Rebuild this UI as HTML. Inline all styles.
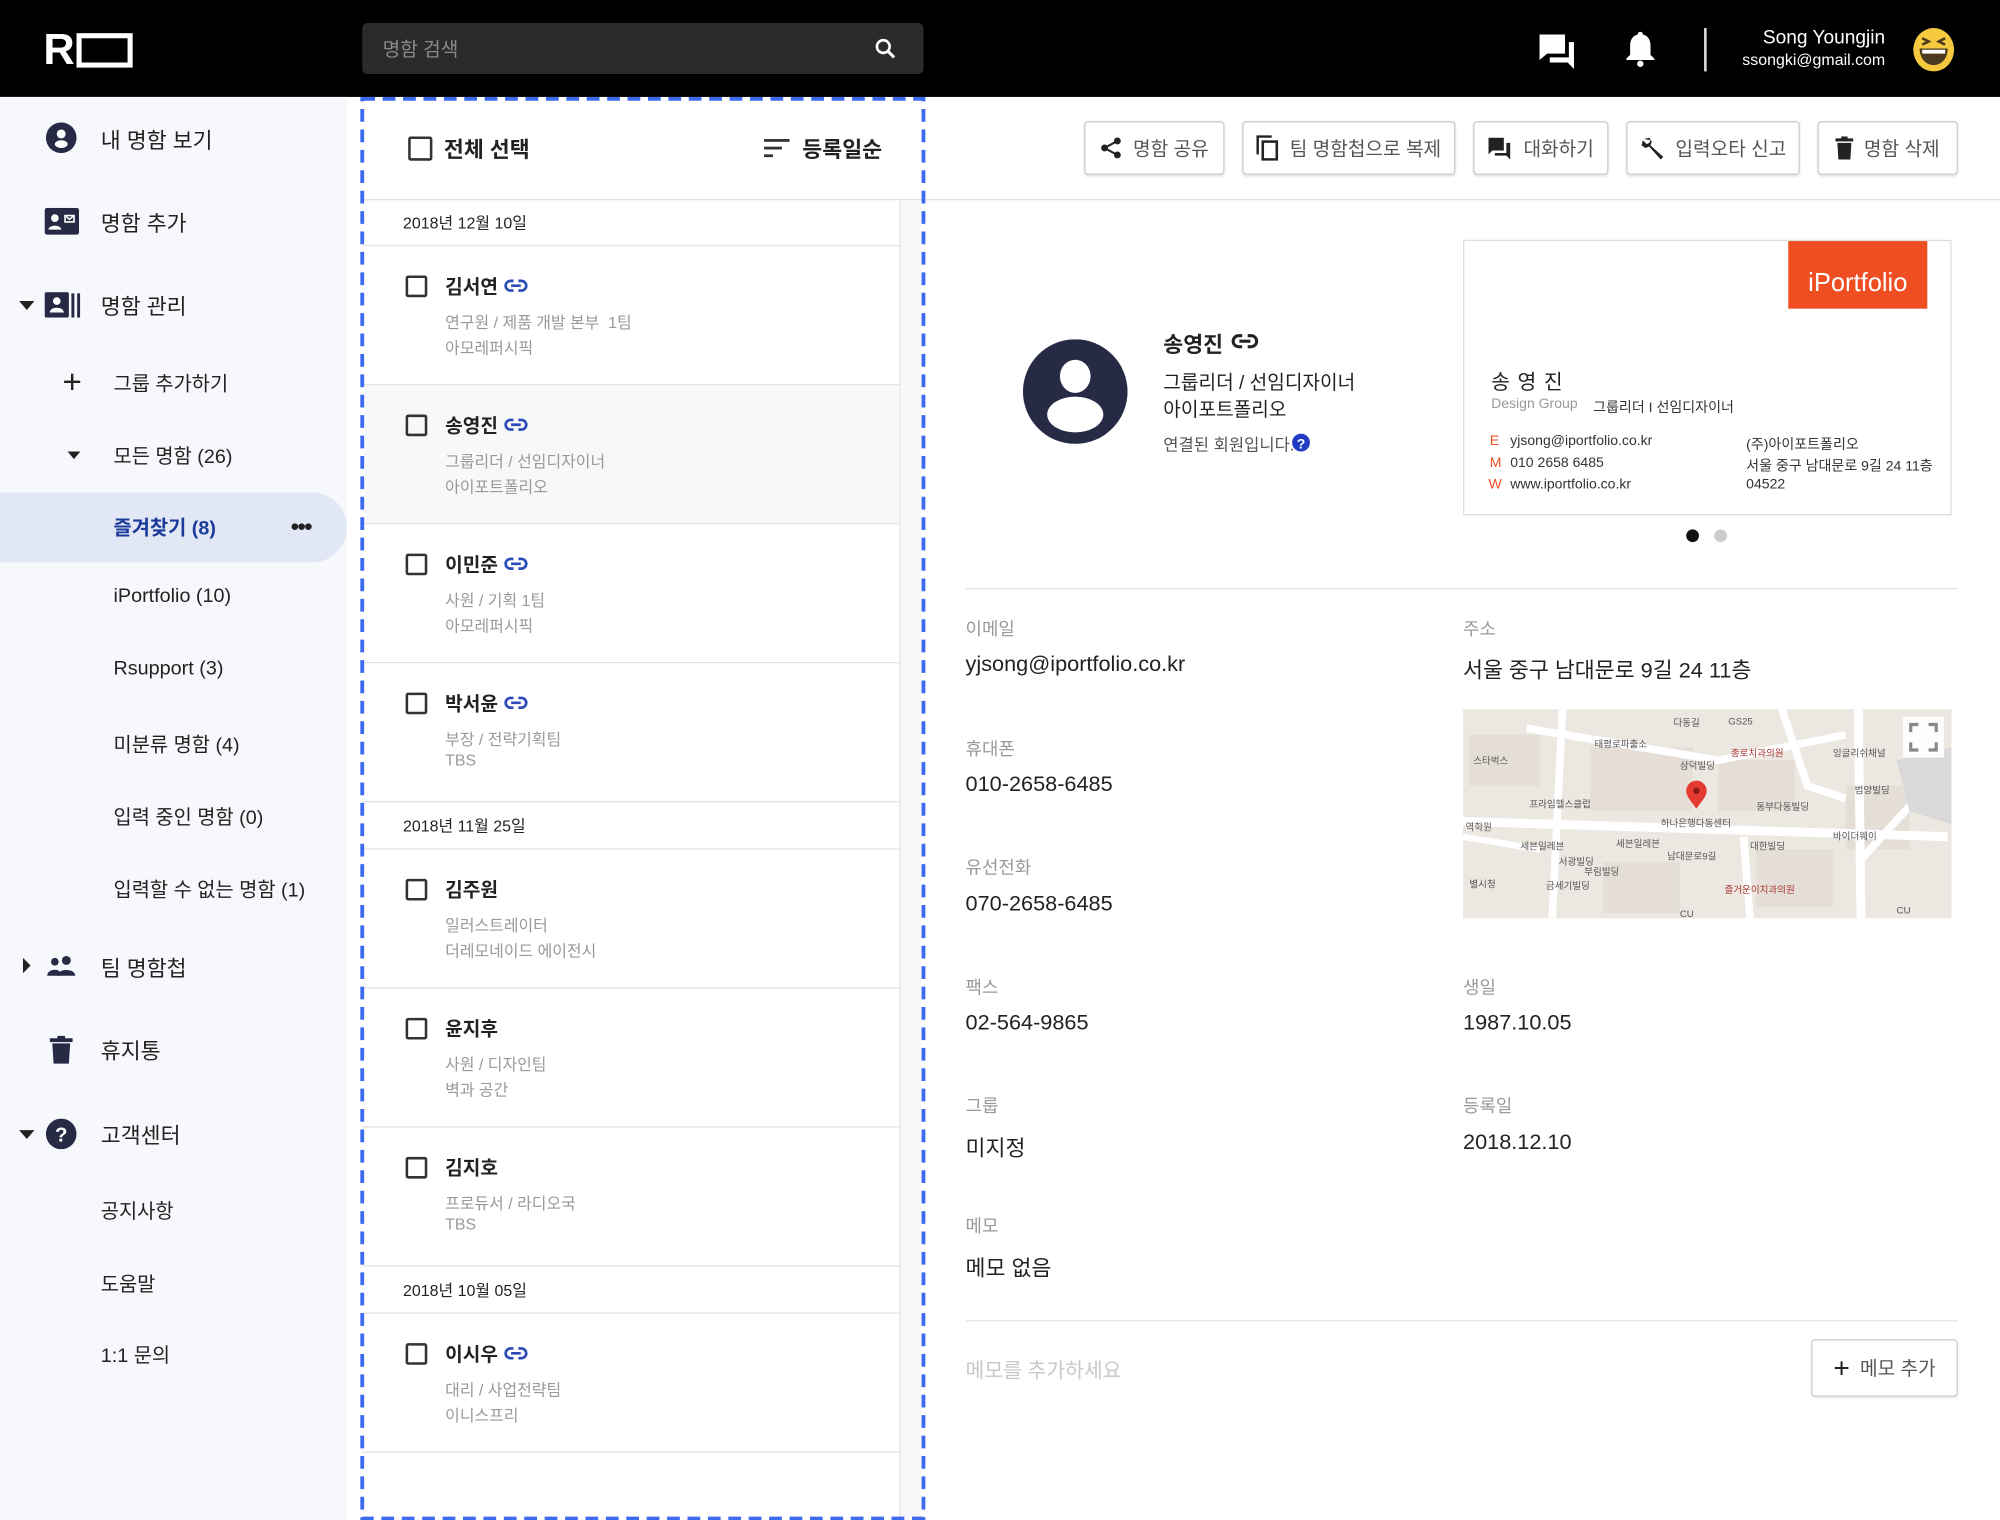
<!DOCTYPE html>
<html><head><meta charset="utf-8"><style>
*{margin:0;padding:0;box-sizing:border-box}
html,body{width:2000px;height:1520px;overflow:hidden;background:#fff}
#w{position:absolute;left:0;top:0;width:1568px;height:1192px;transform:scale(1.27551);transform-origin:0 0;font-family:"Liberation Sans","Noto Sans CJK KR",sans-serif;color:#222}
.a{position:absolute;white-space:nowrap}
.hd{left:0;top:0;width:1568px;height:76px;background:#000}
.sb{left:0;top:76px;width:272px;height:1116px;background:#f7f8fb}
.si{font-size:16px;color:#222}
.cb{position:absolute;width:17px;height:17px;border:2px solid #333;border-radius:2px}
.nm{font-size:15px;font-weight:bold;color:#222}
.sub{font-size:12.5px;color:#999}
.dt{font-size:12.5px;color:#222}
.ln{position:absolute;height:1px;background:#e3e3e3}
.btn{position:absolute;top:95px;height:42px;border:1px solid #ccc;border-radius:3px;background:#fff;box-shadow:0 1px 2px rgba(0,0,0,.12);font-size:15px;color:#555;display:flex;align-items:center;justify-content:center;gap:8px}
.lb{font-size:14px;color:#999}
.vl{font-size:17px;color:#222}
.ci{font-size:11px;color:#333}
</style></head><body><div id="w">
<div class="a hd"></div>
<div class="a" style="left:34px;top:23px;font-size:34px;font-weight:bold;color:#fff;line-height:32px">R</div>
<div class="a" style="left:60px;top:26px;width:44px;height:27px;border:4px solid #fff"></div>
<div class="a" style="left:284px;top:18px;width:440px;height:40px;background:#2b2b2b;border-radius:4px"></div>
<div class="a" style="left:300px;top:28px;font-size:15px;color:#8a8a8a">명함 검색</div>
<svg class="a" style="left:684px;top:28px" width="20" height="20" viewBox="0 0 20 20"><circle cx="8.5" cy="8.5" r="5" stroke="#fff" stroke-width="2" fill="none"/><path d="M12 12l5 5" stroke="#fff" stroke-width="2.4"/></svg>
<svg class="a" style="left:1205px;top:25px" width="32" height="30" viewBox="0 0 32 30"><path d="M2 2h20v15H8l-6 5z" fill="#fff"/><path d="M25 8h4v21l-5-5H10v-4h15z" fill="#fff"/></svg>
<svg class="a" style="left:1273px;top:23px" width="26" height="30" viewBox="0 0 26 30"><path d="M13 2c1.5 0 2 1 2 2 4 1 6 4 6 9v7l3 3v1H2v-1l3-3v-7c0-5 2-8 6-9 0-1 .5-2 2-2z" fill="#fff"/><circle cx="13" cy="27" r="2.5" fill="#fff"/></svg>
<div class="a" style="left:1336px;top:22px;width:2px;height:34px;background:#ddd"></div>
<div class="a" style="right:90px;top:21px;font-size:15px;color:#fff">Song Youngjin</div>
<div class="a" style="right:90px;top:40px;font-size:12.5px;color:#fff">ssongki@gmail.com</div>
<svg class="a" style="left:1499px;top:21px" width="34" height="36" viewBox="0 0 34 36"><ellipse cx="17" cy="18" rx="16" ry="17" fill="#f7c941"/><path d="M8 9l5 2.5-5 2.5M26 9l-5 2.5 5 2.5" stroke="#4a3a20" stroke-width="2" fill="none"/><path d="M6 17h22c0 8-5 13-11 13S6 25 6 17z" fill="#4a3a20"/><path d="M8 18h18v3H8z" fill="#fff"/></svg>

<div class="a sb"></div>
<div class="a" style="left:0;top:386px;width:272px;height:55px;background:#e1e7f5;border-radius:0 28px 28px 0"></div>
<svg class="a" style="left:36px;top:96px" width="24" height="24" viewBox="0 0 24 24"><circle cx="12" cy="12" r="12" fill="#262a45"/><circle cx="12" cy="9" r="3.5" fill="#fff"/><ellipse cx="12" cy="17" rx="5" ry="3" fill="#fff"/></svg>
<div class="a si" style="left:79px;top:96px;font-size:17px">내 명함 보기</div>
<svg class="a" style="left:35px;top:163px" width="27" height="21" viewBox="0 0 27 21"><rect width="27" height="21" rx="2" fill="#262a45"/><circle cx="8" cy="8" r="3" fill="#fff"/><path d="M3 17c0-4 10-4 10 0z" fill="#fff"/><path d="M16 6h7v5h-7z" fill="none" stroke="#fff" stroke-width="1.3"/><path d="M16 6l3.5 3 3.5-3" stroke="#fff" stroke-width="1.2" fill="none"/></svg>
<div class="a si" style="left:79px;top:161px;font-size:17px">명함 추가</div>
<div class="a" style="left:15px;top:236px;border-left:6px solid transparent;border-right:6px solid transparent;border-top:7px solid #222"></div>
<svg class="a" style="left:35px;top:229px" width="28" height="20" viewBox="0 0 28 20"><rect width="19" height="20" rx="1.5" fill="#262a45"/><circle cx="9.5" cy="7" r="3" fill="#fff"/><path d="M4 16c0-5 11-5 11 0z" fill="#fff"/><rect x="21" y="1" width="2.3" height="19" fill="#262a45"/><rect x="25.5" y="1" width="2.3" height="19" fill="#262a45"/></svg>
<div class="a si" style="left:79px;top:226px;font-size:17px">명함 관리</div>
<div class="a" style="left:49px;top:285px;font-size:26px;color:#222;line-height:28px">+</div>
<div class="a si" style="left:89px;top:289px;font-size:15.5px">그룹 추가하기</div>
<div class="a" style="left:53px;top:354px;border-left:5px solid transparent;border-right:5px solid transparent;border-top:6px solid #222"></div>
<div class="a si" style="left:89px;top:346px;font-size:15.5px">모든 명함 (26)</div>
<div class="a" style="left:89px;top:402px;font-size:15.5px;font-weight:bold;color:#1b3b9a">즐겨찾기 (8)</div>
<div class="a" style="left:228px;top:403px;font-size:18px;font-weight:bold;color:#222;letter-spacing:-1px">•••</div>
<div class="a si" style="left:89px;top:459px;font-size:15.5px">iPortfolio (10)</div>
<div class="a si" style="left:89px;top:516px;font-size:15.5px">Rsupport (3)</div>
<div class="a si" style="left:89px;top:572px;font-size:15.5px">미분류 명함 (4)</div>
<div class="a si" style="left:89px;top:629px;font-size:15.5px">입력 중인 명함 (0)</div>
<div class="a si" style="left:89px;top:686px;font-size:15.5px">입력할 수 없는 명함 (1)</div>
<div class="a" style="left:18px;top:751px;border-top:6px solid transparent;border-bottom:6px solid transparent;border-left:6px solid #222"></div>
<svg class="a" style="left:36px;top:748px" width="25" height="18" viewBox="0 0 25 18"><circle cx="16" cy="5" r="3.5" fill="#262a45"/><circle cx="7" cy="6" r="3" fill="#262a45"/><path d="M9 17c0-6 14-6 14 0z" fill="#262a45"/><path d="M1 17c0-5 8-6 10-3v3z" fill="#262a45"/></svg>
<div class="a si" style="left:79px;top:745px;font-size:17px">팀 명함첩</div>
<svg class="a" style="left:39px;top:812px" width="18" height="22" viewBox="0 0 18 22"><rect x="0" y="2" width="18" height="3" fill="#262a45"/><rect x="6" y="0" width="6" height="3" fill="#262a45"/><path d="M2 6h14l-1 16H3z" fill="#262a45"/></svg>
<div class="a si" style="left:79px;top:810px;font-size:17px">휴지통</div>
<div class="a" style="left:15px;top:886px;border-left:6px solid transparent;border-right:6px solid transparent;border-top:7px solid #222"></div>
<svg class="a" style="left:36px;top:877px" width="24" height="24" viewBox="0 0 24 24"><circle cx="12" cy="12" r="12" fill="#262a45"/><text x="12" y="18" text-anchor="middle" font-size="16" font-weight="bold" fill="#fff" font-family="Liberation Sans">?</text></svg>
<div class="a si" style="left:79px;top:876px;font-size:17px">고객센터</div>
<div class="a si" style="left:79px;top:938px;font-size:15.5px">공지사항</div>
<div class="a si" style="left:79px;top:995px;font-size:15.5px">도움말</div>
<div class="a si" style="left:79px;top:1051px;font-size:15.5px">1:1 문의</div>

<div class="a" style="left:705px;top:156px;width:17px;height:1036px;background:#f8f8f8;border-left:1px solid #e6e6e6"></div>
<div class="a" style="left:286px;top:301px;width:419px;height:109px;background:#f7f8fa"></div>
<div class="cb" style="left:320px;top:107px;width:19px;height:19px"></div>
<div class="a" style="left:348px;top:103px;font-size:17px;font-weight:bold">전체 선택</div>
<svg class="a" style="left:599px;top:108px" width="22" height="16" viewBox="0 0 22 16"><rect y="1" width="20" height="2.2" fill="#333"/><rect y="7" width="14" height="2.2" fill="#333"/><rect y="13" width="7" height="2.2" fill="#333"/></svg>
<div class="a" style="left:629px;top:103px;font-size:17px;font-weight:bold">등록일순</div>
<div class="ln" style="left:284px;top:156px;width:1284px"></div>

<div class="a dt" style="left:316px;top:164px">2018년 12월 10일</div>
<div class="ln" style="left:284px;top:192px;width:421px"></div>
<div class="ln" style="left:284px;top:301px;width:421px"></div>
<div class="ln" style="left:284px;top:410px;width:421px"></div>
<div class="ln" style="left:284px;top:519px;width:421px"></div>
<div class="ln" style="left:284px;top:628px;width:421px"></div>
<div class="a dt" style="left:316px;top:637px">2018년 11월 25일</div>
<div class="ln" style="left:284px;top:665px;width:421px"></div>
<div class="ln" style="left:284px;top:774px;width:421px"></div>
<div class="ln" style="left:284px;top:883px;width:421px"></div>
<div class="ln" style="left:284px;top:992px;width:421px"></div>
<div class="a dt" style="left:316px;top:1001px">2018년 10월 05일</div>
<div class="ln" style="left:284px;top:1029px;width:421px"></div>
<div class="ln" style="left:284px;top:1138px;width:421px"></div>

<svg width="0" height="0" style="position:absolute"><defs><symbol id="lk" viewBox="0 0 20 12"><path d="M8 2H5.5a4 4 0 0 0 0 8H8M12 2h2.5a4 4 0 0 1 0 8H12M6 6h8" fill="none" stroke="currentColor" stroke-width="2.2"/></symbol></defs></svg>

<div class="cb" style="left:318px;top:216px"></div><div class="a nm" style="left:349px;top:214px">김서연</div><svg class="a" style="left:395px;top:218px;color:#2a4bb8" width="19" height="12"><use href="#lk"/></svg>
<div class="a sub" style="left:349px;top:242px">연구원 / 제품 개발 본부 &nbsp;1팀</div><div class="a sub" style="left:349px;top:262px">아모레퍼시픽</div>
<div class="cb" style="left:318px;top:325px"></div><div class="a nm" style="left:349px;top:323px">송영진</div><svg class="a" style="left:395px;top:327px;color:#2a4bb8" width="19" height="12"><use href="#lk"/></svg>
<div class="a sub" style="left:349px;top:351px">그룹리더 / 선임디자이너</div><div class="a sub" style="left:349px;top:371px">아이포트폴리오</div>
<div class="cb" style="left:318px;top:434px"></div><div class="a nm" style="left:349px;top:432px">이민준</div><svg class="a" style="left:395px;top:436px;color:#2a4bb8" width="19" height="12"><use href="#lk"/></svg>
<div class="a sub" style="left:349px;top:460px">사원 / 기획 1팀</div><div class="a sub" style="left:349px;top:480px">아모레퍼시픽</div>
<div class="cb" style="left:318px;top:543px"></div><div class="a nm" style="left:349px;top:541px">박서윤</div><svg class="a" style="left:395px;top:545px;color:#2a4bb8" width="19" height="12"><use href="#lk"/></svg>
<div class="a sub" style="left:349px;top:569px">부장 / 전략기획팀</div><div class="a sub" style="left:349px;top:589px">TBS</div>
<div class="cb" style="left:318px;top:689px"></div><div class="a nm" style="left:349px;top:687px">김주원</div>
<div class="a sub" style="left:349px;top:715px">일러스트레이터</div><div class="a sub" style="left:349px;top:735px">더레모네이드 에이전시</div>
<div class="cb" style="left:318px;top:798px"></div><div class="a nm" style="left:349px;top:796px">윤지후</div>
<div class="a sub" style="left:349px;top:824px">사원 / 디자인팀</div><div class="a sub" style="left:349px;top:844px">벽과 공간</div>
<div class="cb" style="left:318px;top:907px"></div><div class="a nm" style="left:349px;top:905px">김지호</div>
<div class="a sub" style="left:349px;top:933px">프로듀서 / 라디오국</div><div class="a sub" style="left:349px;top:953px">TBS</div>
<div class="cb" style="left:318px;top:1053px"></div><div class="a nm" style="left:349px;top:1051px">이시우</div><svg class="a" style="left:395px;top:1055px;color:#2a4bb8" width="19" height="12"><use href="#lk"/></svg>
<div class="a sub" style="left:349px;top:1079px">대리 / 사업전략팀</div><div class="a sub" style="left:349px;top:1099px">이니스프리</div>

<svg class="a" style="left:282px;top:76px" width="444" height="1116"><rect x="2" y="1.5" width="440" height="1113" fill="none" stroke="#3d6bf0" stroke-width="3" stroke-dasharray="10 6"/></svg>

<div class="btn" style="left:850px;width:110px"><svg width="18" height="18" viewBox="0 0 18 18"><circle cx="14" cy="3.5" r="2.7" fill="#222"/><circle cx="4" cy="9" r="2.7" fill="#222"/><circle cx="14" cy="14.5" r="2.7" fill="#222"/><path d="M14 3.5L4 9l10 5.5" stroke="#222" stroke-width="1.6" fill="none"/></svg>명함 공유</div>
<div class="btn" style="left:974px;width:167px"><svg width="18" height="20" viewBox="0 0 18 20"><path d="M1 15V1h11" stroke="#222" stroke-width="2" fill="none"/><rect x="5" y="5" width="11" height="14" stroke="#222" stroke-width="2" fill="none"/></svg>팀 명함첩으로 복제</div>
<div class="btn" style="left:1155px;width:106px"><svg width="20" height="18" viewBox="0 0 20 18"><path d="M1 1h12v10H4l-3 3z" fill="#222"/><path d="M15 5h3v13l-3-3H6v-2h9z" fill="#222"/></svg>대화하기</div>
<div class="btn" style="left:1275px;width:136px"><svg width="20" height="20" viewBox="0 0 20 20"><path d="M3 3l4-1 2 3-1 3 10 9-2 2-9-10-3 1-3-2 1-4 3 3 2-1 1-2z" fill="#222"/></svg>입력오타 신고</div>
<div class="btn" style="left:1425px;width:110px"><svg width="14" height="18" viewBox="0 0 14 18"><rect y="1.5" width="14" height="2.4" fill="#222"/><rect x="4.5" y="0" width="5" height="2" fill="#222"/><path d="M1.5 5h11l-.8 13H2.3z" fill="#222"/></svg>명함 삭제</div>

<svg class="a" style="left:802px;top:266px" width="82" height="82" viewBox="0 0 82 82"><circle cx="41" cy="41" r="41" fill="#262a45"/><ellipse cx="41" cy="29" rx="12" ry="13" fill="#fff"/><ellipse cx="41" cy="59" rx="22" ry="14" fill="#fff"/></svg>
<div class="a" style="left:912px;top:256px;font-size:17px;font-weight:bold">송영진</div>
<svg class="a" style="left:965px;top:261px;color:#222" width="22" height="13"><use href="#lk"/></svg>
<div class="a" style="left:912px;top:289px;font-size:15px">그룹리더 / 선임디자이너</div>
<div class="a" style="left:912px;top:310px;font-size:15px">아이포트폴리오</div>
<div class="a" style="left:912px;top:338px;font-size:13px;color:#555">연결된 회원입니다.</div>
<svg class="a" style="left:1013px;top:340px" width="14" height="14" viewBox="0 0 14 14"><circle cx="7" cy="7" r="7" fill="#1f3cc2"/><text x="7" y="11.5" text-anchor="middle" font-size="11" font-weight="bold" fill="#fff" font-family="Liberation Sans">?</text></svg>

<div class="a" style="left:1147px;top:188px;width:383px;height:216px;border:1px solid #ddd;background:#fff"></div>
<div class="a" style="left:1402px;top:189px;width:109px;height:53px;background:#ef4e23;color:#fff;font-size:20px;display:flex;align-items:flex-end;justify-content:center;padding-bottom:8px">iPortfolio</div>
<div class="a" style="left:1169px;top:286px;font-size:16px;letter-spacing:6px">송영진</div>
<div class="a" style="left:1169px;top:311px;font-size:11px;color:#999">Design Group</div>
<div class="a" style="left:1249px;top:311px;font-size:11px;color:#333">그룹리더 I 선임디자이너</div>
<div class="a ci" style="left:1168px;top:340px;color:#ef4e23">E</div><div class="a ci" style="left:1184px;top:340px">yjsong@iportfolio.co.kr</div>
<div class="a ci" style="left:1168px;top:357px;color:#ef4e23">M</div><div class="a ci" style="left:1184px;top:357px">010 2658 6485</div>
<div class="a ci" style="left:1167px;top:374px;color:#ef4e23">W</div><div class="a ci" style="left:1184px;top:374px">www.iportfolio.co.kr</div>
<div class="a ci" style="left:1369px;top:340px">(주)아이포트폴리오</div>
<div class="a ci" style="left:1369px;top:357px">서울 중구 남대문로 9길 24 11층</div>
<div class="a ci" style="left:1369px;top:374px">04522</div>
<div class="a" style="left:1322px;top:415px;width:10px;height:10px;border-radius:50%;background:#111"></div>
<div class="a" style="left:1344px;top:415px;width:10px;height:10px;border-radius:50%;background:#ccc"></div>

<div class="ln" style="left:757px;top:461px;width:778px"></div>

<div class="a lb" style="left:757px;top:483px">이메일</div><div class="a vl" style="left:757px;top:511px">yjsong@iportfolio.co.kr</div>
<div class="a lb" style="left:1147px;top:483px">주소</div><div class="a vl" style="left:1147px;top:511px">서울 중구 남대문로 9길 24 11층</div>
<div class="a lb" style="left:757px;top:577px">휴대폰</div><div class="a vl" style="left:757px;top:605px">010-2658-6485</div>
<div class="a lb" style="left:757px;top:670px">유선전화</div><div class="a vl" style="left:757px;top:699px">070-2658-6485</div>
<div class="a lb" style="left:757px;top:764px">팩스</div><div class="a vl" style="left:757px;top:792px">02-564-9865</div>
<div class="a lb" style="left:1147px;top:764px">생일</div><div class="a vl" style="left:1147px;top:792px">1987.10.05</div>
<div class="a lb" style="left:757px;top:857px">그룹</div><div class="a vl" style="left:757px;top:886px">미지정</div>
<div class="a lb" style="left:1147px;top:857px">등록일</div><div class="a vl" style="left:1147px;top:886px">2018.12.10</div>
<div class="a lb" style="left:757px;top:951px">메모</div><div class="a vl" style="left:757px;top:980px">메모 없음</div>

<svg class="a" style="left:1147px;top:556px" width="383" height="164" viewBox="0 0 383 164" font-family="Liberation Sans,Noto Sans CJK KR,sans-serif" font-size="7.5">
<rect width="383" height="164" fill="#ece7e1"/>
<g fill="#e4ded7"><rect x="5" y="20" width="55" height="40"/><rect x="100" y="30" width="80" height="50"/><rect x="200" y="40" width="60" height="40"/><rect x="300" y="60" width="50" height="50"/><rect x="110" y="120" width="60" height="40"/><rect x="230" y="110" width="60" height="45"/></g>
<g stroke="#fff" fill="none"><path d="M0 88L380 100" stroke-width="7"/><path d="M78 0L70 164" stroke-width="6"/><path d="M250 0L270 60L300 70" stroke-width="6"/><path d="M50 15L200 40L300 20" stroke-width="6"/><path d="M310 0L312 164" stroke-width="7"/><path d="M220 100L225 164" stroke-width="6"/><path d="M310 120L383 40" stroke-width="6"/><path d="M0 100L60 110" stroke-width="5"/></g>
<path d="M340 40L383 30V90L350 80z" fill="#d9d9d9"/>
<g fill="#555"><text x="8" y="43">스타벅스</text><text x="103" y="30">태평로파출소</text><text x="170" y="47">삼덕빌딩</text><text x="210" y="37" fill="#a33">종로치과의원</text><text x="52" y="77">프라임헬스클럽</text><text x="155" y="92">하나은행다동센터</text><text x="45" y="110">세븐일레븐</text><text x="120" y="108">세븐일레븐</text><text x="160" y="118">남대문로9길</text><text x="225" y="110">대한빌딩</text><text x="75" y="122">서광빌딩</text><text x="95" y="130">부림빌딩</text><text x="65" y="141">금세기빌딩</text><text x="205" y="144" fill="#a33">즐거운이치과의원</text><text x="230" y="79">동부다동빌딩</text><text x="290" y="37">잉글리쉬채널</text><text x="307" y="66">범양빌딩</text><text x="290" y="102">바이더웨이</text><text x="2" y="95">역학원</text><text x="5" y="140">별시청</text><text x="165" y="13">다동길</text><text x="208" y="12">GS25</text><text x="170" y="163">CU</text><text x="340" y="160">CU</text></g>
<path d="M183 78c-5-7-8-10-8-14a8 8 0 0 1 16 0c0 4-3 7-8 14z" fill="#e53a2f"/><circle cx="183" cy="64" r="2.5" fill="#8a1a12"/>
<rect x="345" y="6" width="32" height="32" fill="#fff" opacity=".9"/><path d="M351 18v-6h6M371 18v-6h-6M351 26v6h6M371 26v6h-6" stroke="#888" stroke-width="2.5" fill="none"/>
</svg>

<div class="ln" style="left:757px;top:1035px;width:778px"></div>
<div class="a" style="left:757px;top:1061px;font-size:16px;color:#c8c8c8">메모를 추가하세요</div>
<div class="a" style="left:1420px;top:1050px;width:115px;height:45px;border:1px solid #ccc;border-radius:3px;box-shadow:0 1px 2px rgba(0,0,0,.1);font-size:15px;color:#555;display:flex;align-items:center;justify-content:center;gap:8px"><span style="font-size:22px;color:#222;line-height:20px">+</span>메모 추가</div>
</div></body></html>
